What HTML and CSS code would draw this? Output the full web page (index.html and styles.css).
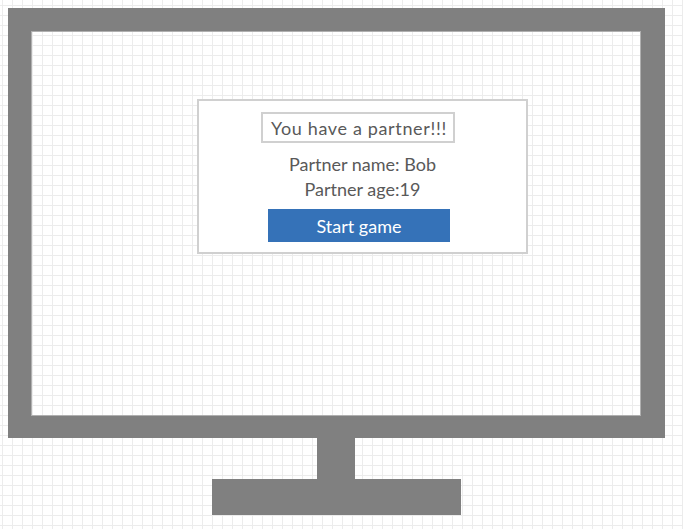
FILE: index.html
```html
<!DOCTYPE html>
<html>
<head>
<meta charset="utf-8">
<link rel="stylesheet" href="styles.css">
</head>
<body>
<div class="page">
  <div class="monitor">
    <div class="screen">
      <div class="dialog">
        <div class="title">You have a partner!!!</div>
        <div class="info first">Partner name: Bob</div>
        <div class="info">Partner age:19</div>
        <div class="button">Start game</div>
      </div>
    </div>
  </div>
  <div class="neck"></div>
  <div class="base"></div>
</div>
</body>
</html>
```
FILE: styles.css
```css
html, body {
  margin: 0;
  padding: 0;
}
body {
  width: 683px;
  height: 529px;
  overflow: hidden;
  background-color: #ffffff;
  background-image:
    linear-gradient(to right, #ececec 1px, transparent 1px),
    linear-gradient(to bottom, #ececec 1px, transparent 1px);
  background-size: 10px 10px;
  background-position: 2px 5px;
  font-family: Lato, "Open Sans", sans-serif;
  color: #595959;
}
.page {
  padding: 8px 0 0 8px;
}
.monitor {
  width: 610px;
  height: 385px;
  border-style: solid;
  border-color: #808080;
  border-width: 23px 24px 22px 23px;
}
.screen {
  width: 610px;
  height: 385px;
  box-shadow: inset 0 0 0 1px #b0b0b0;
  padding-top: 68px;
  box-sizing: border-box;
}
.dialog {
  margin-left: 166px;
  width: 327px;
  height: 151px;
  border: 2px solid #d0d0d0;
  background: #ffffff;
  display: flex;
  flex-direction: column;
  align-items: center;
}
.title {
  align-self: flex-start;
  margin-left: 62px;
  margin-top: 11px;
  width: 190px;
  height: 27px;
  border: 2px solid #d0d0d0;
  font-size: 18px;
  letter-spacing: 0.65px;
  line-height: 29px;
  text-indent: 8px;
  white-space: nowrap;
}
.info {
  font-size: 18px;
  line-height: 25px;
}
.info.first {
  margin-top: 9px;
}
.button {
  align-self: flex-start;
  margin-left: 69px;
  margin-top: 7px;
  width: 182px;
  height: 33px;
  background: #3572b8;
  color: #ffffff;
  font-size: 18px;
  line-height: 34px;
  text-align: center;
}
.neck {
  margin-left: 309px;
  width: 38px;
  height: 41px;
  background: #808080;
}
.base {
  margin-left: 204px;
  width: 249px;
  height: 36px;
  background: #808080;
}
```
